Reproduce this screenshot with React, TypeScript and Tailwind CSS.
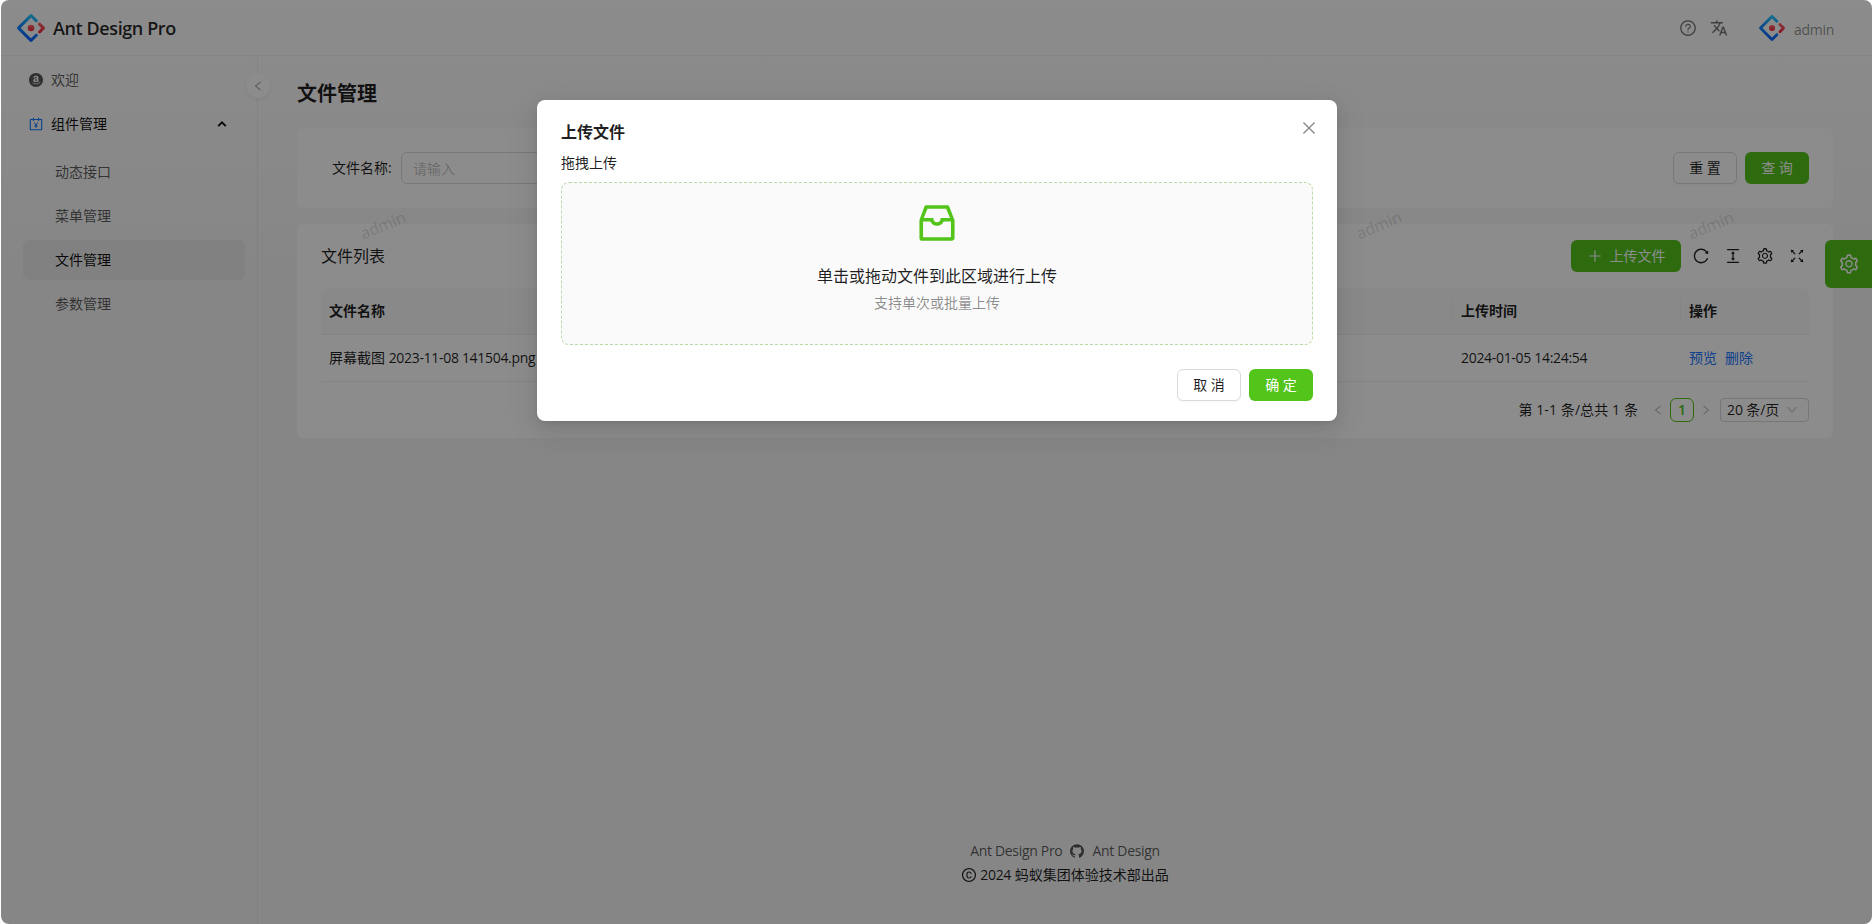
import type { ReactNode } from "react";
import {
  AiFillAmazonCircle,
  AiFillGithub,
  AiOutlineAccountBook,
  AiOutlineClose,
  AiOutlineColumnHeight,
  AiOutlineCopyright,
  AiOutlineDown,
  AiOutlineFullscreen,
  AiOutlineInbox,
  AiOutlineLeft,
  AiOutlinePlus,
  AiOutlineQuestionCircle,
  AiOutlineReload,
  AiOutlineRight,
  AiOutlineSetting,
} from "react-icons/ai";

function Logo({ id, className }: { id: string; className: string }) {
  return (
    <svg viewBox="0 0 200 200" className={className}>
      <defs>
        <linearGradient id={`${id}-b`} x1="50%" y1="0%" x2="40%" y2="100%">
          <stop offset="0%" stopColor="#29cdff" />
          <stop offset="40%" stopColor="#148eff" />
          <stop offset="100%" stopColor="#0a60ff" />
        </linearGradient>
        <linearGradient id={`${id}-c`} x1="70%" y1="-13%" x2="45%" y2="115%">
          <stop offset="0%" stopColor="#fa816e" />
          <stop offset="42%" stopColor="#f74a5c" />
          <stop offset="100%" stopColor="#f51d2c" />
        </linearGradient>
      </defs>
      <path
        fill={`url(#${id}-b)`}
        d="M91.588 4.177 4.18 91.513c-4.699 4.695-4.699 12.279 0 16.974l87.408 87.336c4.7 4.696 12.29 4.696 16.989 0l36.648-36.618c4.209-4.205 4.209-11.023 0-15.228-4.208-4.205-11.031-4.205-15.24 0l-27.783 27.76c-1.17 1.169-2.945 1.169-4.114 0L28.286 101.993c-1.17-1.168-1.17-2.942 0-4.111l69.802-69.744c1.169-1.169 2.944-1.169 4.114 0l27.783 27.76c4.209 4.205 11.032 4.205 15.24 0 4.209-4.205 4.209-11.022 0-15.227L108.58 4.056c-4.718-4.594-12.31-4.557-16.992.12Z"
      />
      <path
        fill={`url(#${id}-c)`}
        d="M153.686 135.855c4.208 4.205 11.031 4.205 15.24 0l27.034-27.012c4.699-4.696 4.699-12.28 0-16.974l-27.27-27.151c-4.218-4.2-11.043-4.194-15.254.014-4.209 4.205-4.209 11.022 0 15.227l18.418 18.403c1.17 1.17 1.17 2.943 0 4.111l-18.168 18.154c-4.209 4.205-4.209 11.023 0 15.228Z"
      />
      <circle cx="100.5" cy="100.4" r="23.6" fill={`url(#${id}-c)`} />
    </svg>
  );
}

function TranslateIcon() {
  return (
    <svg viewBox="0 0 24 24" fill="currentColor" className="size-[18px]">
      <path d="m12.87 15.07-2.54-2.51.03-.03c1.74-1.94 2.98-4.17 3.71-6.53H17V4h-7V2H8v2H1v1.99h11.17C11.5 7.92 10.44 9.75 9 11.35 8.07 10.32 7.3 9.19 6.69 8h-2c.73 1.63 1.73 3.17 2.98 4.56l-5.09 5.02L4 19l5-5 3.11 3.11zM18.5 10h-2L12 22h2l1.12-3h4.75L21 22h2zm-2.62 7 1.62-4.33L19.12 17z" />
    </svg>
  );
}

function MenuArrow() {
  return (
    <svg viewBox="0 0 10 10" fill="none" stroke="currentColor" strokeWidth="1.9" className="ml-auto size-[10px]">
      <path d="M1.2 7.2 5 3.4l3.8 3.8" />
    </svg>
  );
}

function Latin({ children }: { children: ReactNode }) {
  return <span className="tracking-[-0.31px]">{children}</span>;
}

function SubItem({ label, active = false }: { label: string; active?: boolean }) {
  return (
    <div
      className={
        active
          ? "flex h-10 items-center rounded-md bg-black/4 pl-8 text-black/95"
          : "flex h-10 items-center rounded-md pl-8 text-black/65"
      }
    >
      {label}
    </div>
  );
}

function Button({ children, primary = false }: { children: ReactNode; primary?: boolean }) {
  return (
    <button
      className={
        primary
          ? "flex h-8 w-16 items-center justify-center rounded-md bg-[#52c41a] text-sm text-white"
          : "flex h-8 w-16 items-center justify-center rounded-md border border-[#d9d9d9] bg-white text-sm text-black/88 shadow-[0_2px_0_rgba(0,0,0,0.02)]"
      }
    >
      {children}
    </button>
  );
}

function Header() {
  return (
    <header className="flex h-14 shrink-0 items-center border-b border-black/5 pr-[38px] pl-4">
      <Logo id="brand" className="size-7" />
      <span className="mt-[2px] ml-2 text-[18px] font-semibold tracking-[-0.4px] text-black/85">Ant Design Pro</span>
      <div className="ml-auto flex items-center text-black/55">
        <AiOutlineQuestionCircle className="size-[18px]" />
        <span className="ml-[13px]">
          <TranslateIcon />
        </span>
        <Logo id="avatar" className="ml-[31px] size-[26px]" />
        <span className="mt-1 ml-[9px] text-sm tracking-[-0.3px] text-black/45">admin</span>
      </div>
    </header>
  );
}

function Sidebar() {
  return (
    <aside className="relative w-[257px] shrink-0 border-r border-black/5 pt-1 pr-3 pl-[22px] text-sm">
      <div className="flex h-10 items-center pl-[5px] text-black/65">
        <AiFillAmazonCircle className="size-4" />
        <span className="ml-[7px]">欢迎</span>
      </div>
      <div className="mt-1 flex h-10 items-center pr-[18px] pl-[5px] text-black/95">
        <AiOutlineAccountBook className="size-4 text-[#1677ff]" />
        <span className="ml-[7px]">组件管理</span>
        <MenuArrow />
      </div>
      <div className="mt-2 flex flex-col gap-1">
        <SubItem label="动态接口" />
        <SubItem label="菜单管理" />
        <SubItem label="文件管理" active />
        <SubItem label="参数管理" />
      </div>
      <div className="absolute top-[18px] -right-[13px] flex size-6 items-center justify-center rounded-full bg-white text-black/40 shadow-[0_2px_8px_-2px_rgba(0,0,0,0.05),0_1px_4px_-1px_rgba(25,15,15,0.07)]">
        <AiOutlineLeft className="size-3" />
      </div>
    </aside>
  );
}

function SearchCard() {
  return (
    <section className="mt-[18px] flex h-20 items-center rounded-md bg-white pr-6 pl-[35px] text-sm">
      <label className="w-[62px] text-black/88">文件名称:</label>
      <input
        placeholder="请输入"
        className="ml-[7px] h-8 w-[370px] rounded-md border border-[#d9d9d9] px-[11px] placeholder:text-black/25"
      />
      <div className="ml-auto flex gap-2">
        <Button>重 置</Button>
        <Button primary>查 询</Button>
      </div>
    </section>
  );
}

function TableCard() {
  return (
    <section className="mt-4 h-[214px] rounded-md bg-white px-6 pt-4 text-sm text-black/88">
      <div className="flex h-8 items-center">
        <h2 className="text-base">文件列表</h2>
        <button className="ml-auto flex h-8 w-[110px] items-center justify-center rounded-md bg-[#52c41a] text-white">
          <AiOutlinePlus className="size-4" />
          <span className="ml-[7px]">上传文件</span>
        </button>
        <div className="ml-[11px] flex gap-[14px] pr-[3px]">
          <AiOutlineReload className="size-[18px]" />
          <AiOutlineColumnHeight className="size-[18px]" />
          <AiOutlineSetting className="size-[18px]" />
          <AiOutlineFullscreen className="size-[18px]" />
        </div>
      </div>
      <div className="mt-4 flex h-[47px] items-center rounded-t-lg border-b border-[#f0f0f0] bg-[#fafafa] font-semibold">
        <div className="flex h-[22px] flex-1 items-center border-r border-[#f0f0f0] pl-2">文件名称</div>
        <div className="flex h-[22px] w-[228px] items-center border-r border-[#f0f0f0] pl-2">上传时间</div>
        <div className="w-[128px] pl-2">操作</div>
      </div>
      <div className="flex h-[47px] items-center border-b border-[#f0f0f0]">
        <div className="flex-1 pl-2">
          屏幕截图 <Latin>2023-11-08 141504.png</Latin>
        </div>
        <div className="w-[228px] pl-2">
          <Latin>2024-01-05 14:24:54</Latin>
        </div>
        <div className="flex w-[128px] gap-2 pl-2 text-[#1677ff]">
          <a>预览</a>
          <a>删除</a>
        </div>
      </div>
      <div className="mt-4 flex h-6 items-center justify-end">
        <span className="tracking-[0.1px]">第 1-1 条/总共 1 条</span>
        <AiOutlineLeft className="ml-[14px] size-3 text-black/30" />
        <span className="ml-[6px] flex size-6 items-center justify-center rounded-md border border-[#52c41a] bg-white font-semibold text-[#52c41a]">
          1
        </span>
        <AiOutlineRight className="ml-[6px] size-3 text-black/30" />
        <div className="ml-2 flex h-6 w-[89px] items-center justify-between rounded border border-[#d9d9d9] pr-[10px] pl-[6px]">
          <span className="whitespace-nowrap tracking-[-0.1px]">20 条/页</span>
          <AiOutlineDown className="size-3 text-black/25" />
        </div>
      </div>
    </section>
  );
}

function Footer() {
  return (
    <footer className="mt-auto flex flex-col items-center gap-[2px] pb-[38px] text-sm">
      <div className="flex h-[22px] items-center gap-[7px] text-black/65">
        <Latin>Ant Design Pro</Latin>
        <AiFillGithub className="size-4" />
        <Latin>Ant Design</Latin>
      </div>
      <div className="flex h-[22px] items-center text-black/88">
        <AiOutlineCopyright className="mr-[3px] size-4" />
        <span>
          <Latin>2024</Latin> 蚂蚁集团体验技术部出品
        </span>
      </div>
    </footer>
  );
}

function UploadModal() {
  return (
    <div className="absolute top-[100px] left-[537px] flex h-[321px] w-[800px] flex-col rounded-lg bg-white px-6 py-5 text-sm text-black/88 shadow-[0_6px_16px_0_rgba(0,0,0,0.08),0_3px_6px_-4px_rgba(0,0,0,0.12),0_9px_28px_8px_rgba(0,0,0,0.05)]">
      <div className="flex h-6 items-center justify-between">
        <h3 className="text-base font-semibold">上传文件</h3>
        <AiOutlineClose className="mt-[-8px] mr-[-5px] size-[18px] text-black/45" />
      </div>
      <p className="mt-2 leading-[22px]">拖拽上传</p>
      <div className="mt-2 flex h-[163px] flex-col items-center rounded-lg border border-dashed border-[#b7dba6] bg-[#fafafa] pt-4">
        <AiOutlineInbox className="size-12 text-[#52c41a]" />
        <p className="mt-[17px] text-base leading-6">单击或拖动文件到此区域进行上传</p>
        <p className="mt-1 leading-[22px] text-black/45">支持单次或批量上传</p>
      </div>
      <div className="mt-6 flex justify-end gap-2">
        <Button>取 消</Button>
        <Button primary>确 定</Button>
      </div>
    </div>
  );
}

const watermarks = [383, 715, 1047, 1379, 1711];

export default function App() {
  return (
    <div className="h-[924px] w-full overflow-hidden bg-white pl-px font-['Open_Sans','Noto_Sans_CJK_SC',sans-serif]">
      <div className="relative flex h-full flex-col overflow-hidden rounded-lg bg-[linear-gradient(#ffffff,#f5f5f5_28%)]">
        <Header />
        <div className="flex min-h-0 flex-1">
          <Sidebar />
          <main className="flex min-w-0 flex-1 flex-col pt-[22px] pr-[39px] pl-[39px]">
            <h1 className="h-8 text-xl leading-8 font-semibold text-black/88">文件管理</h1>
            <SearchCard />
            <TableCard />
            <Footer />
          </main>
        </div>
        {watermarks.map((x) => (
          <span
            key={x}
            className="absolute top-[213px] -ml-[26px] w-[50px] rotate-[-22deg] text-center text-base leading-6 text-black/15"
            style={{ left: x }}
          >
            admin
          </span>
        ))}
        <div className="absolute top-[240px] right-0 flex h-12 w-[47px] items-center justify-center rounded-l-md bg-[#52c41a] text-white">
          <AiOutlineSetting className="size-[22px]" />
        </div>
        <div className="absolute inset-0 bg-black/45" />
      </div>
      <UploadModal />
    </div>
  );
}
